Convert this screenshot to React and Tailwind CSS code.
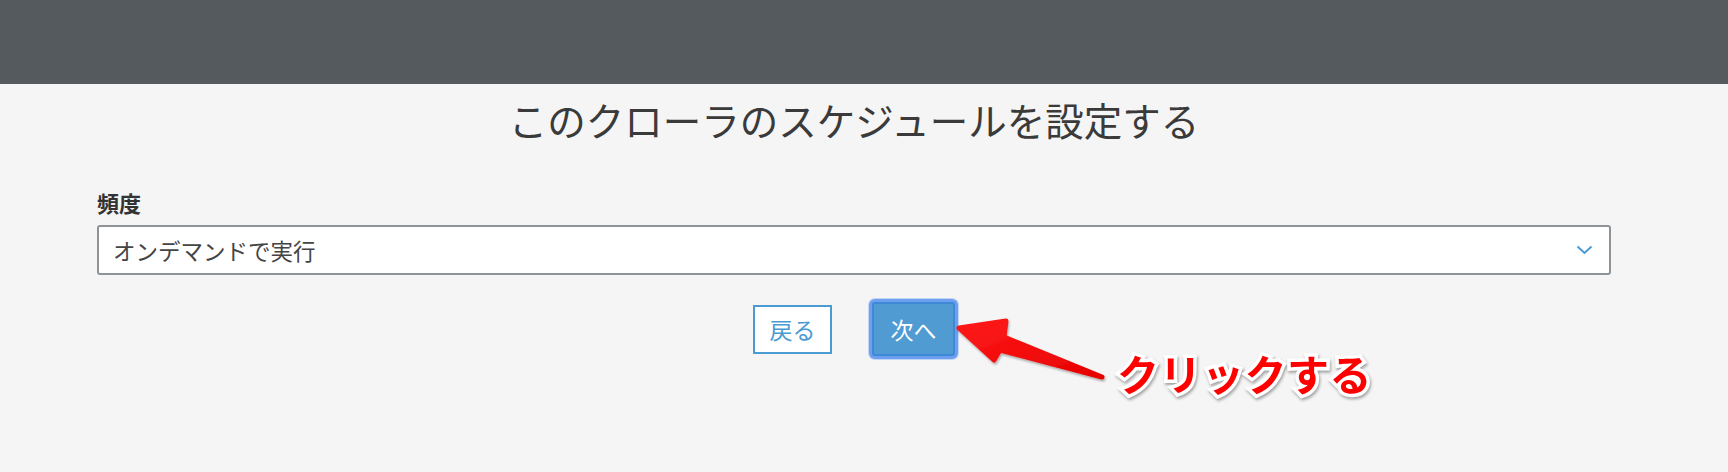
import React from "react";

export default function App() {
  const jp = { fontFamily: '"Noto Sans CJK JP", "Noto Sans", sans-serif' };
  return (
    <div className="relative w-full min-h-[472px] bg-[#f4f5f4] overflow-hidden" style={jp}>
      <div className="h-[84px] bg-[#545a5d]" />
      <div className="pl-[97px] pr-[117px]">
        <h1 className="mt-[12px] text-center text-[38.5px] leading-[46px] font-normal text-[#3a3a3a]">
          このクローラのスケジュールを設定する
        </h1>
        <div className="mt-[47px] text-[22px] leading-[26px] font-bold text-[#333]">頻度</div>
        <div className="mt-[10px] h-[50px] flex items-center justify-between rounded-[3px] border-2 border-[#8d9397] bg-white pl-[14px] pr-[16px]">
          <span className="text-[22.5px] leading-[28px] text-[#444]">オンデマンドで実行</span>
          <svg width="17" height="10" viewBox="0 0 17 10" fill="none">
            <path d="M1.5 1.5 L8.5 8 L15.5 1.5" stroke="#4a9ad4" strokeWidth="2" />
          </svg>
        </div>
        <div className="mt-[27px] flex items-center justify-center gap-[40px]">
          <button className="h-[49px] w-[79px] border-2 border-[#4b9bd3] bg-white text-[23px] text-[#4b9bd3]">
            戻る
          </button>
          <button className="h-[54px] w-[83px] rounded-[3px] border-2 border-[#3f88d6] bg-[#4f9bd2] text-[23px] text-white shadow-[0_0_0_3px_#6d9ff0,0_0_0_4px_#c3d6f5]">
            次へ
          </button>
        </div>
      </div>

      <svg className="absolute left-0 top-0 pointer-events-none" width="1728" height="472" viewBox="0 0 1728 472">
        <defs>
          <linearGradient id="ag" x1="0" y1="0" x2="1" y2="1">
            <stop offset="0" stopColor="#ff1a1a" />
            <stop offset="1" stopColor="#e60000" />
          </linearGradient>
          <filter id="sh" x="-20%" y="-20%" width="140%" height="140%">
            <feDropShadow dx="1" dy="2" stdDeviation="1.2" floodColor="#000" floodOpacity="0.3" />
          </filter>
        </defs>
        <path
          d="M959 328 L1006 321 L1004 337 L1102 377 L1000 350 L994 360 Z"
          fill="url(#ag)"
          stroke="url(#ag)"
          strokeWidth="5"
          strokeLinejoin="round"
          filter="url(#sh)"
        />
      </svg>

      <div
        className="absolute left-[1117px] top-[344px] text-[42px] leading-[58px] font-bold tracking-[0.5px] text-[#ff0000] [-webkit-text-stroke:7px_white] [paint-order:stroke_fill] [filter:drop-shadow(1px_2px_1.5px_rgba(0,0,0,0.35))]"
      >
        クリックする
      </div>
    </div>
  );
}
